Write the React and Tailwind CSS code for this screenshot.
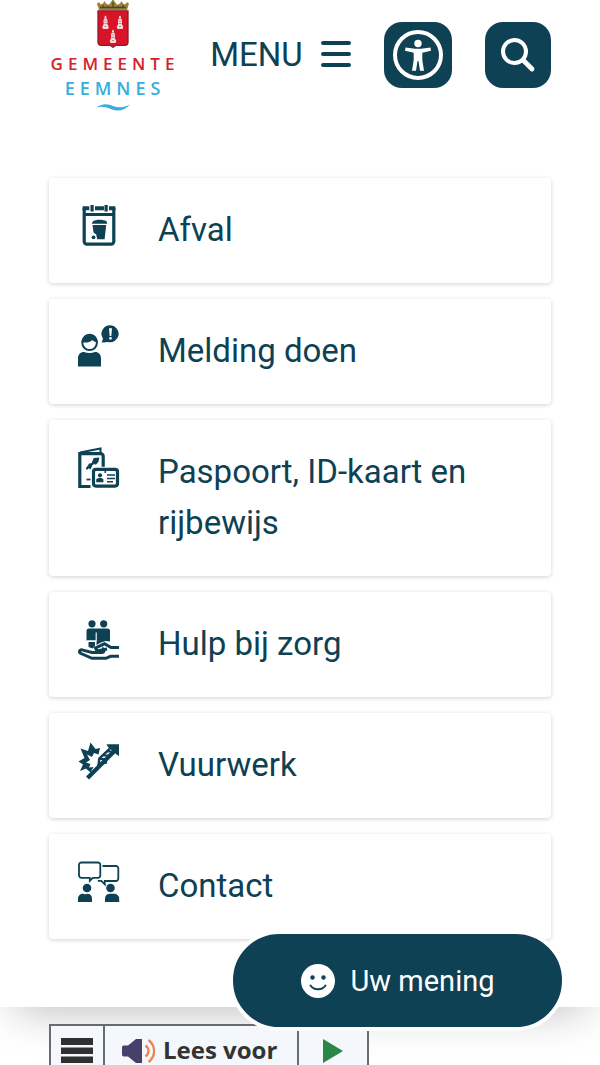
import React from "react";

const ICON = "h-[42px] w-[42px] shrink-0";

function WasteIcon() {
  return (
    <svg viewBox="0 0 42 42" className={ICON} fill="none" aria-hidden="true">
      <path d="M6.200 4v33.500a2.600 2.600 0 0 0 2.600 2.600h24.400a2.600 2.600 0 0 0 2.600-2.600V4" stroke="currentColor" strokeWidth="3.200" />
      <path d="M4.600 2.200h6.700v4H4.600zM17 2.200h9v4h-9zM31 2.200h6.400v4H31z" fill="currentColor" />
      <path d="M12.500 1h3.200v6.500h-3.200zM26.500 1h3.200v6.500h-3.200z" fill="currentColor" />
      <path d="M6 9h30v3H6z" fill="currentColor" />
      <path d="M15 17.300c3-2 10-2 13.500 0l.8 2.500H13.700zM14.500 21h13.700l-1.600 14.300h-7.400l-1-4.800-2.700-2z" fill="currentColor" />
      <circle cx="15.500" cy="33.300" r="1.900" fill="currentColor" />
    </svg>
  );
}

function ReportIcon() {
  return (
    <svg viewBox="0 0 42 42" className={ICON} fill="none" aria-hidden="true">
      <circle cx="11.600" cy="17.800" r="7.300" stroke="currentColor" strokeWidth="2" />
      <path d="M3.800 17c.2-11 15.600-10.800 15.800 0-2 .2-3.700-.6-5.200-2.100-3 2.600-6.500 3.300-10.600 2.100z" fill="currentColor" />
      <path d="M0 41.500v-8c0-4 2.300-6.500 6-6.500 3.500 1.300 7.500 1.300 11 0 3.700 0 6 2.500 6 6.500v8z" fill="currentColor" />
      <path d="M32.300 .3a8.700 8.500 0 1 1-2.600 16.700c-2 .3-4 .5-6.500 .3 1.300-1.300 1.700-2.500 1.600-4A8.700 8.500 0 0 1 32.300 .3z" fill="currentColor" />
      <path d="M31 3.300h3l-.7 7.700h-1.600z" fill="#fff" />
      <circle cx="32.500" cy="13.300" r="1.400" fill="#fff" />
    </svg>
  );
}

function PassportIcon() {
  return (
    <svg viewBox="0 0 42 42" className={ICON} fill="none" stroke="currentColor" aria-hidden="true">
      <path d="M2 6.500 22.500 2.500V6" strokeWidth="2" />
      <path d="M12.500 40.500H1.800V7.700h20.900a2.500 2.500 0 0 1 2.500 2.500v10.500" strokeWidth="3.200" />
      <path d="m9 22.500 2-2.500M12 22l1.500-3.500M11.500 18.500l3-.5 1-2.500 1-2.500 3.500-.3-.5 2.600-2 2.200" fill="currentColor" strokeWidth="2.200" strokeLinecap="round" />
      <path d="M8.500 33.500h4" strokeWidth="1.800" />
      <rect x="15.500" y="23.300" width="24" height="16.800" rx="2.500" fill="#fff" strokeWidth="3.200" />
      <path d="M27.300 23v4M29 29h8M29 32.500h8M29 35.800h6" strokeWidth="1.600" />
      <circle cx="22" cy="29.300" r="2.100" fill="currentColor" stroke="none" />
      <path d="M18.200 36.300v-2.500c0-2.500 7.200-2.500 7.200 0v2.500z" fill="currentColor" stroke="none" />
    </svg>
  );
}

function CareIcon() {
  return (
    <svg viewBox="0 0 42 42" className={ICON} fill="none" aria-hidden="true">
      <circle cx="14" cy="5.800" r="3.600" fill="currentColor" />
      <circle cx="25.700" cy="5.800" r="3.600" fill="currentColor" />
      <path d="M8.500 13A2.500 2.500 0 0 1 11 10.500h18.500A2.500 2.500 0 0 1 32 13v10.500l-4.500-.5-4.500 1.500-4.500 2.500v-4.500h-10z" fill="currentColor" />
      <path d="M10.500 24H17v4l-2.500 2.500-4-1.500z" fill="currentColor" />
      <path d="M18.200 14.500V23H9" stroke="#fff" strokeWidth="1.100" />
      <path d="M41 29.600h-8l-6.500-3.800-9 4.200 1.500 3 10-2" stroke="currentColor" strokeWidth="3" />
      <path d="M41 38.300h-8.500l-4.500 2H14L2.500 35.300c-2.700-2 .3-4.200 2.500-3.200l9 2.400h9.500c3 0 3.500-3.200.5-4" stroke="currentColor" strokeWidth="3" />
    </svg>
  );
}

function FireworkIcon() {
  return (
    <svg viewBox="0 0 42 42" className={ICON} fill="none" aria-hidden="true">
      <path
        d="M12.500 3.500 17.500 10 22 9 20.500 15.500 16 14 14 18 9 15.500 12 21 8 23.500 12.500 25 11 28.500 15.500 28 12.500 33.500 8 29.500 2 32 5 25.500 .5 22.500 6.500 19 2.500 9.500 10 12z"
        fill="currentColor"
      />
      <path d="M9.500 39 36 12.500" stroke="currentColor" strokeWidth="4.200" />
      <path d="M20.500 26.500 21.300 19.500 32 9.500" stroke="currentColor" strokeWidth="2.400" />
      <path d="m22 25 7-1.500M22 20l7.500 0M25.500 16.500l7.500 0M29.500 12.500l6 0" stroke="currentColor" strokeWidth="2" />
      <path d="M28.500 5.200H41V17l-3-2-8-7z" fill="currentColor" />
    </svg>
  );
}

function ContactIcon() {
  return (
    <svg viewBox="0 0 42 42" className={ICON} fill="none" aria-hidden="true">
      <path d="M3.500 2.500h16.300a2.500 2.500 0 0 1 2.500 2.500v10.300a2.500 2.500 0 0 1-2.500 2.500h-5l-3 3v-3H3.500A2.500 2.500 0 0 1 1 15.300V5a2.500 2.500 0 0 1 2.500-2.500z" stroke="currentColor" strokeWidth="1.800" />
      <path d="M24.500 6h13.300a2.500 2.500 0 0 1 2.500 2.500v10a2.500 2.500 0 0 1-2.500 2.500h-11v3.300L23.300 20.800h-3.500" stroke="currentColor" strokeWidth="1.800" />
      <circle cx="9" cy="28" r="4.300" fill="currentColor" />
      <circle cx="32.500" cy="28" r="4.300" fill="currentColor" />
      <path d="M0 42v-3c0-3 2-5.200 5-5.200 2.500 1 5 1 7.500 0M5 33.800c2.300.8 2.300.8 4.500 0 3 0 4.500 2.200 4.500 5.200v3H0z" fill="currentColor" />
      <path d="M27 42v-3c0-3 1.500-5.200 4.500-5.200h4.500c3 0 5.200 2.200 5.200 5.200v3z" fill="currentColor" />
    </svg>
  );
}

const links = [
  { label: "Afval", Icon: WasteIcon },
  { label: "Melding doen", Icon: ReportIcon },
  { label: "Paspoort, ID-kaart en rijbewijs", Icon: PassportIcon },
  { label: "Hulp bij zorg", Icon: CareIcon },
  { label: "Vuurwerk", Icon: FireworkIcon },
  { label: "Contact", Icon: ContactIcon },
];

function Herring({ x, y }) {
  return (
    <g transform={`translate(${x} ${y})`}>
      <path d="M0-6.500c1 .8 1.200 1.800 1 3 1.200 1 1.300 3.500.7 5.200L3.300 5 2.500 7h-5l-.8-2 1.600-3.300c-.6-1.700-.5-4.200.7-5.200-.2-1.200 0-2.200 1-3z" fill="#f3dcda" />
      <path d="M-.8-3.500h1.600M-1.200-1h2.400M-1.200 1.500h2.400M-1 4.500h2" stroke="#8a5a5e" strokeWidth=".6" />
    </g>
  );
}

function Logo() {
  return (
    <a href="#home" aria-label="Gemeente Eemnes" className="flex w-32 flex-col items-center font-['Open_Sans',sans-serif] font-semibold">
      <svg viewBox="0 0 34 48" className="h-12 w-[34px]" aria-hidden="true">
        <path d="M3 10 1 3.500l2-1.200 2 2.200 2-1 1.500-2.500L10 3.500l3 1.200L15 2l2-3 2 3 2 2.700 3-1.200L25.500 1 27 3.500l2 1 2-2.200 2 1.200L31 10z" fill="#9a8238" />
        <path d="M4 7.500h26M7 5v2M12 6v2M17 2v5M22 6v2M27 5v2" stroke="#4c4726" strokeWidth="1.300" />
        <path d="M2 10.800h30v31.500c0 2-1.200 3-3 3H20l-3 2-3-2H5c-1.800 0-3-1-3-3z" fill="#da1428" stroke="#8c1a27" strokeWidth="1.300" />
        <Herring x={9.5} y={22} />
        <Herring x={24} y={22} />
        <Herring x={17} y={36} />
      </svg>
      <span className="mt-1 pl-1 text-[17px] leading-6 tracking-[5px] text-[#d6202f]">GEMEENTE</span>
      <span className="pl-1 text-[18px] leading-6 tracking-[5px] text-[#36aee0]">EEMNES</span>
      <svg viewBox="0 0 34 7" className="mt-1 h-[7px] w-[34px]" aria-hidden="true">
        <path d="M0 3.500C7-1 12 0 17 2c6 2.300 11 1.500 17-1.500-5 5.500-11 7.500-18 5C10 3 6 2 0 3.500z" fill="#36aee0" />
      </svg>
    </a>
  );
}

export default function App() {
  return (
    <div className="min-h-screen overflow-x-hidden bg-white font-['Roboto',sans-serif] text-[#0e4154]">
      <div className="relative bg-white px-[49px] pb-[68px] shadow-[0_20px_40px_-15px_rgba(0,0,0,0.25)]">
        <header className="flex items-start justify-between">
          <Logo />
          <button type="button" className="mt-[22px] flex h-16 items-center gap-[18px] text-[33px] leading-[51px]">
            MENU
            <svg viewBox="0 0 30 26" className="h-[26px] w-[30px]" aria-hidden="true">
              <path d="M2 2h26M2 13h26M2 24h26" stroke="currentColor" strokeWidth="4" strokeLinecap="round" />
            </svg>
          </button>
          <button type="button" aria-label="Toegankelijkheid" className="mt-[22px] flex h-[66px] w-[68px] items-center justify-center rounded-[18px] bg-[#0e4154]">
            <svg viewBox="0 0 50 50" className="h-[50px] w-[50px] text-white" aria-hidden="true">
              <circle cx="25" cy="25" r="23" fill="none" stroke="currentColor" strokeWidth="4" />
              <circle cx="25" cy="13.500" r="3.700" fill="currentColor" />
              <path d="M12.500 17.500 22 18.800h6l9.500-1.300.5 3.300-8.700 2V30l1.700 10.700h-4L25.500 31h-1L23 40.700h-4L20.700 30v-7.200l-8.700-2z" fill="currentColor" />
            </svg>
          </button>
          <button type="button" aria-label="Zoeken" className="mt-[22px] flex h-[66px] w-[66px] items-center justify-center rounded-[18px] bg-[#0e4154]">
            <svg viewBox="0 0 36 36" className="h-9 w-9 text-white" fill="none" stroke="currentColor" strokeLinecap="round" aria-hidden="true">
              <circle cx="14.500" cy="14.500" r="11.500" strokeWidth="4" />
              <path d="m23.500 23.500 8.500 8.500" strokeWidth="4.800" />
            </svg>
          </button>
        </header>

        <nav aria-label="Snel naar" className="mt-[67px] flex flex-col gap-4">
          {links.map(({ label, Icon }) => (
            <a
              key={label}
              href="#onderwerp"
              className="flex items-start gap-[38px] rounded-sm bg-white px-[29px] pt-[26px] pb-7 shadow-[0_1px_4px_rgba(0,0,0,0.18)]"
            >
              <Icon />
              <span className="text-[33px] leading-[51px]">{label}</span>
            </a>
          ))}
        </nav>
      </div>

      <div className="relative flex px-[49px] pt-[17px]">
        <div className="flex h-[41px] border-2 border-b-0 border-[#666d72] bg-[#f4f8fc] font-['Open_Sans',sans-serif] text-[#333]">
          <button type="button" aria-label="webReader menu" className="flex w-[54px] justify-center border-r-2 border-[#666d72] pt-3">
            <svg viewBox="0 0 32 25" className="h-[25px] w-8" aria-hidden="true">
              <path d="M0 0h32v7H0zM0 9.500h32v6.500H0zM0 18.500h32V25H0z" fill="#2f3131" />
            </svg>
          </button>
          <button type="button" className="flex items-start gap-2 pt-2 pr-5 pl-4 text-[24px] leading-8 font-bold">
            <svg viewBox="0 0 34 26" className="mt-1 h-[26px] w-[34px]" fill="none" aria-hidden="true">
              <path d="M1 9.500C1 8 2 7.500 3.500 7.500H7L15 1h6v24h-6l-8-6.500H3.500C2 18.500 1 18 1 16.500z" fill="#46416b" />
              <path d="M24.500 7.500c4 3 4 8 0 11M27.500 2c7.500 6 7.500 16 0 22" stroke="#ef8354" strokeWidth="2.300" />
            </svg>
            Lees voor
          </button>
          <button type="button" aria-label="Afspelen" className="flex w-[70px] justify-center border-l-2 border-[#666d72] pt-[13px]">
            <svg viewBox="0 0 20 24" className="h-6 w-5" aria-hidden="true">
              <path d="M0 0v24l20-12z" fill="#2a8745" />
            </svg>
          </button>
        </div>
      </div>

      <button
        type="button"
        className="fixed right-[34px] bottom-[34px] flex h-[101px] w-[337px] items-center justify-center gap-4 rounded-full border-4 border-white bg-[#0e4154] text-[29px] leading-9 text-white"
      >
        <svg viewBox="0 0 34 34" className="h-[34px] w-[34px]" aria-hidden="true">
          <circle cx="17" cy="17" r="17" fill="#fff" />
          <circle cx="11.500" cy="13.500" r="2.200" fill="#0e4154" />
          <circle cx="22.500" cy="13.500" r="2.200" fill="#0e4154" />
          <path d="M9.500 21.500c3.500 5 11.500 5 15 0" fill="none" stroke="#0e4154" strokeWidth="2" strokeLinecap="round" />
        </svg>
        Uw mening
      </button>
    </div>
  );
}
